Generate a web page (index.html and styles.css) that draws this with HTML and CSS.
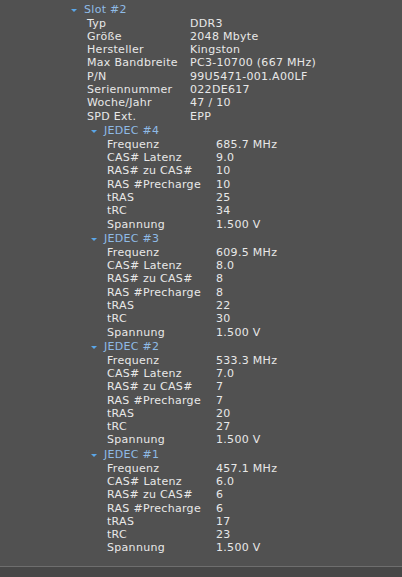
FILE: index.html
```html
<!DOCTYPE html>
<html lang="de">
<head>
  <meta charset="UTF-8">
  <title>SPD</title>
  <link rel="stylesheet" href="styles.css">
</head>
<body>

  <div class="tree">
    <div class="node">
      <div class="head"><span class="arrow"></span>Slot #2</div>
      <div class="rows">
        <div class="row"><span class="key">Typ</span><span>DDR3</span></div>
        <div class="row"><span class="key">Größe</span><span>2048 Mbyte</span></div>
        <div class="row"><span class="key">Hersteller</span><span>Kingston</span></div>
        <div class="row"><span class="key">Max Bandbreite</span><span>PC3-10700 (667 MHz)</span></div>
        <div class="row"><span class="key">P/N</span><span>99U5471-001.A00LF</span></div>
        <div class="row"><span class="key">Seriennummer</span><span>022DE617</span></div>
        <div class="row"><span class="key">Woche/Jahr</span><span>47 / 10</span></div>
        <div class="row"><span class="key">SPD Ext.</span><span>EPP</span></div>
      </div>

      <div class="node sub">
        <div class="head"><span class="arrow"></span>JEDEC #4</div>
        <div class="rows">
          <div class="row"><span class="key">Frequenz</span><span>685.7 MHz</span></div>
          <div class="row"><span class="key">CAS# Latenz</span><span>9.0</span></div>
          <div class="row"><span class="key">RAS# zu CAS#</span><span>10</span></div>
          <div class="row"><span class="key">RAS #Precharge</span><span>10</span></div>
          <div class="row"><span class="key">tRAS</span><span>25</span></div>
          <div class="row"><span class="key">tRC</span><span>34</span></div>
          <div class="row"><span class="key">Spannung</span><span>1.500 V</span></div>
        </div>
      </div>

      <div class="node sub">
        <div class="head"><span class="arrow"></span>JEDEC #3</div>
        <div class="rows">
          <div class="row"><span class="key">Frequenz</span><span>609.5 MHz</span></div>
          <div class="row"><span class="key">CAS# Latenz</span><span>8.0</span></div>
          <div class="row"><span class="key">RAS# zu CAS#</span><span>8</span></div>
          <div class="row"><span class="key">RAS #Precharge</span><span>8</span></div>
          <div class="row"><span class="key">tRAS</span><span>22</span></div>
          <div class="row"><span class="key">tRC</span><span>30</span></div>
          <div class="row"><span class="key">Spannung</span><span>1.500 V</span></div>
        </div>
      </div>

      <div class="node sub">
        <div class="head"><span class="arrow"></span>JEDEC #2</div>
        <div class="rows">
          <div class="row"><span class="key">Frequenz</span><span>533.3 MHz</span></div>
          <div class="row"><span class="key">CAS# Latenz</span><span>7.0</span></div>
          <div class="row"><span class="key">RAS# zu CAS#</span><span>7</span></div>
          <div class="row"><span class="key">RAS #Precharge</span><span>7</span></div>
          <div class="row"><span class="key">tRAS</span><span>20</span></div>
          <div class="row"><span class="key">tRC</span><span>27</span></div>
          <div class="row"><span class="key">Spannung</span><span>1.500 V</span></div>
        </div>
      </div>

      <div class="node sub">
        <div class="head"><span class="arrow"></span>JEDEC #1</div>
        <div class="rows">
          <div class="row"><span class="key">Frequenz</span><span>457.1 MHz</span></div>
          <div class="row"><span class="key">CAS# Latenz</span><span>6.0</span></div>
          <div class="row"><span class="key">RAS# zu CAS#</span><span>6</span></div>
          <div class="row"><span class="key">RAS #Precharge</span><span>6</span></div>
          <div class="row"><span class="key">tRAS</span><span>17</span></div>
          <div class="row"><span class="key">tRC</span><span>23</span></div>
          <div class="row"><span class="key">Spannung</span><span>1.500 V</span></div>
        </div>
      </div>
    </div>
  </div>

  <footer class="statusbar"></footer>

</body>
</html>
```

FILE: styles.css
```css
html, body {
  height: 100%;
}

body {
  margin: 0;
  background-color: #515151;
  color: #e8e8e8;
  font-family: "DejaVu Sans", Verdana, sans-serif;
  font-size: 11px;
  letter-spacing: 0.3px;
  display: flex;
  flex-direction: column;
}

.tree {
  flex: 1;
  padding: 3px 0 0 70px;
}

.head {
  display: flex;
  align-items: center;
  height: 13.5px;
  line-height: 13.5px;
  color: #8fbbe6;
}

.arrow {
  width: 0;
  height: 0;
  border-left: 3px solid transparent;
  border-right: 3px solid transparent;
  border-top: 3px solid #5aa6e8;
  margin: 1px 7px 0 1px;
}

.rows {
  padding-left: 17px;
}

.row {
  display: flex;
  height: 13.3px;
  line-height: 13.3px;
}

.key {
  width: 103px;
}

.sub {
  margin-left: 20px;
}

.sub .head {
  height: 13.9px;
  line-height: 13.9px;
  padding-top: 1px;
}

.sub .rows {
  padding-left: 17px;
}

.sub .key {
  width: 109px;
}

.statusbar {
  height: 10px;
  border-top: 1px solid #6e6e6e;
  background-color: #474747;
}
```
